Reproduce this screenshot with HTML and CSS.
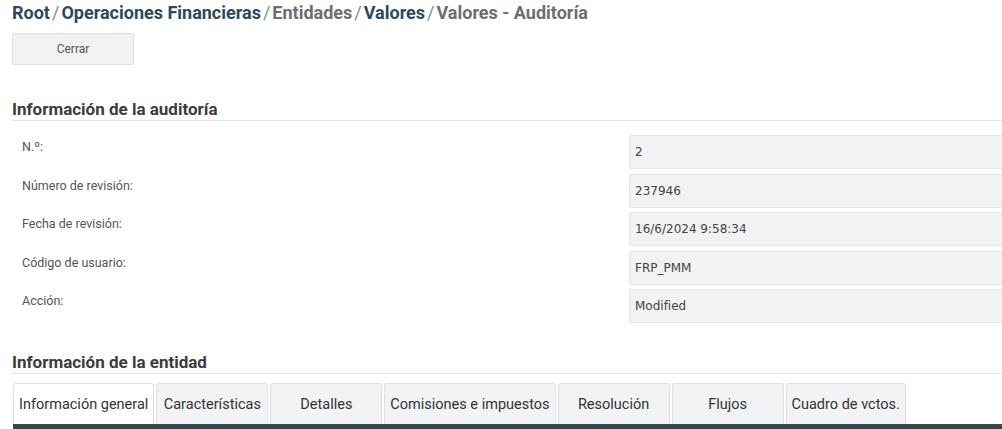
FILE: index.html
```html
<!DOCTYPE html>
<html lang="es">
<head>
    <meta charset="UTF-8">
    <title>Valores - Auditoría</title>
    <link rel="stylesheet" href="styles.css">
</head>
<body>
    <div class="page">
        <div class="breadcrumb">
            <span class="crumb link">Root</span><span class="sep">/</span><span class="crumb link">Operaciones Financieras</span><span class="sep">/</span><span class="crumb">Entidades</span><span class="sep">/</span><span class="crumb link">Valores</span><span class="sep">/</span><span class="crumb">Valores - Auditoría</span>
        </div>
        <button class="btn">Cerrar</button>

        <h2 class="section">Información de la auditoría</h2>
        <div class="form">
            <div class="row"><label>N.º:</label><div class="field">2</div></div>
            <div class="row"><label>Número de revisión:</label><div class="field">237946</div></div>
            <div class="row"><label>Fecha de revisión:</label><div class="field">16/6/2024 9:58:34</div></div>
            <div class="row"><label>Código de usuario:</label><div class="field">FRP_PMM</div></div>
            <div class="row"><label>Acción:</label><div class="field">Modified</div></div>
        </div>

        <h2 class="section">Información de la entidad</h2>
        <div class="tabs">
            <div class="tab active">Información general</div>
            <div class="tab">Características</div>
            <div class="tab">Detalles</div>
            <div class="tab">Comisiones e impuestos</div>
            <div class="tab">Resolución</div>
            <div class="tab">Flujos</div>
            <div class="tab">Cuadro de vctos.</div>
        </div>
        <div class="tab-bar"></div>
    </div>
</body>
</html>
```

FILE: styles.css
```css
body {
    margin: 0;
    font-family: 'Roboto', 'Liberation Sans', sans-serif;
    color: #333;
    background: #fff;
    overflow: hidden;
}

.page {
    padding: 2px 0 0 12px;
}

.breadcrumb {
    font-size: 18px;
    font-weight: bold;
    color: #6b6e70;
    height: 22px;
    line-height: 22px;
}

.crumb.link {
    color: #2d4a5c;
}

.sep {
    font-weight: normal;
    color: #8a8a8a;
    margin: 0 2px;
}

.btn {
    display: block;
    margin-top: 9px;
    width: 122px;
    height: 32px;
    background: #f2f2f2;
    border: 1px solid #dcdfe0;
    border-radius: 2px;
    font-family: 'Roboto', sans-serif;
    font-size: 12px;
    color: #555;
}

.section {
    font-size: 17px;
    font-weight: bold;
    color: #3c3c3c;
    margin: 24px 0 0;
    padding-bottom: 1px;
    border-bottom: 1px solid #e2e4e5;
    line-height: 20px;
}

.btn + .section {
    margin-top: 34px;
}

.form {
    padding-top: 14px;
}

.row {
    display: grid;
    grid-template-columns: 617px 1fr;
    height: 38.5px;
}

.row label {
    padding: 4px 0 0 10px;
    font-size: 12.5px;
    color: #555;
}

.field {
    height: 32px;
    line-height: 32px;
    margin-right: -4px;
    padding-left: 5px;
    background: #f2f2f2;
    border: 1px solid #e3e5e6;
    border-radius: 2px;
    font-family: 'DejaVu Sans', Verdana, sans-serif;
    font-size: 12px;
    color: #444;
}

.tabs {
    display: flex;
    gap: 2px;
    margin-top: 9px;
    padding-left: 1px;
}

.tab {
    height: 40px;
    line-height: 42px;
    min-width: 100px;
    padding: 0 5px;
    background: #f1f3f4;
    border: 1px solid #dde1e3;
    border-bottom: none;
    border-radius: 3px 3px 0 0;
    font-size: 14.5px;
    color: #333;
    text-align: center;
}

.tab.active {
    background: #fff;
}

.tab-bar {
    height: 6px;
    margin-left: 1px;
    background: #3b454b;
}
```
